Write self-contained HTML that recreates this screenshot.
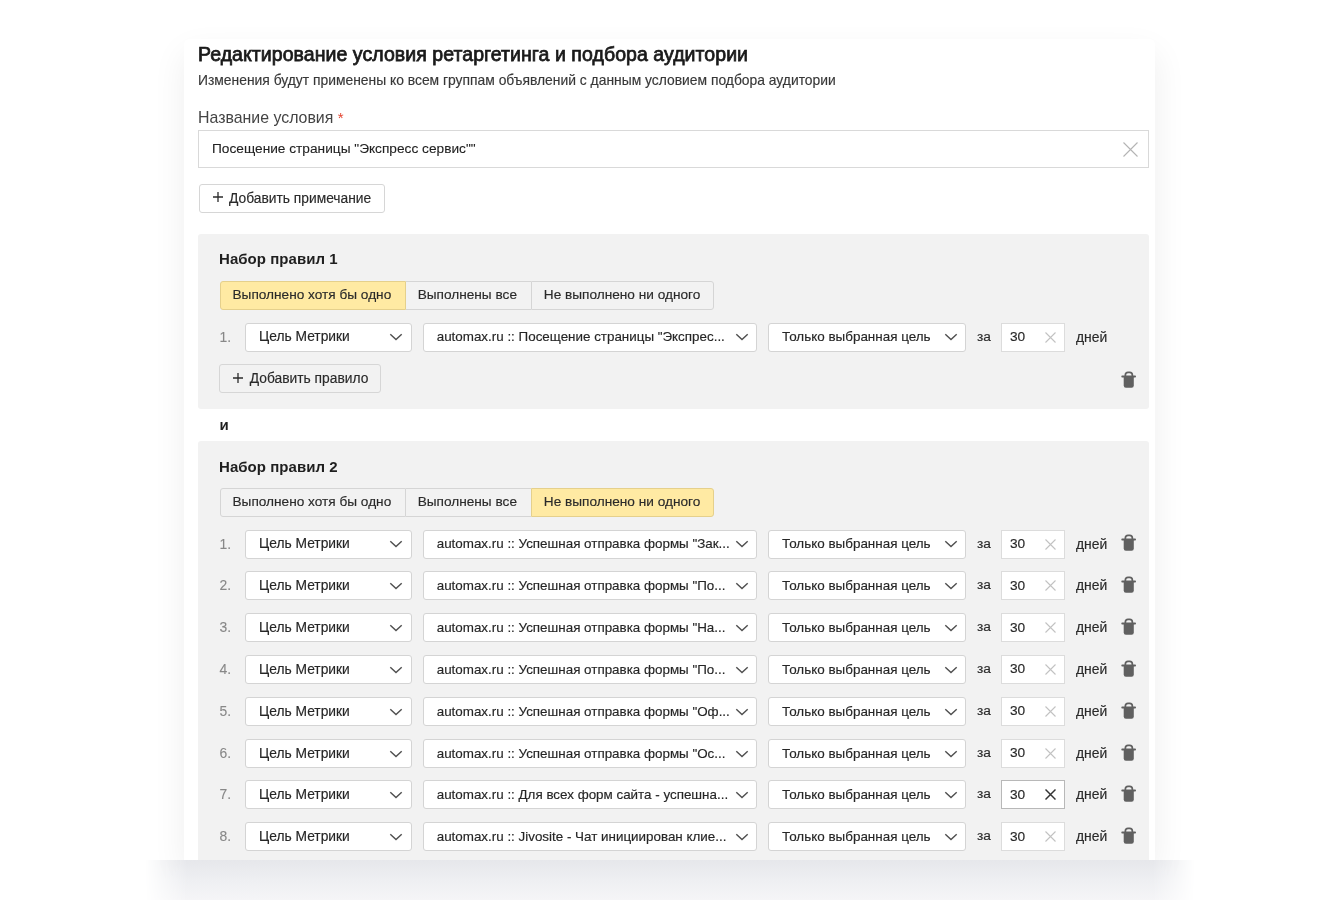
<!DOCTYPE html><html><head><meta charset="utf-8"><style>
*{box-sizing:border-box;margin:0;padding:0}
html,body{width:1340px;height:900px;overflow:hidden;background:#fff}
body{position:relative;will-change:transform;font-family:"Liberation Sans",sans-serif;color:#333}
.num,.sel,.za,.ninp,.dn,.tr,.segw,.t{position:absolute}
#shadow{position:absolute;left:184px;top:39px;width:971px;height:821px;border-radius:6px;box-shadow:0 14px 34px rgba(0,0,0,.07)}
#bshadow{position:absolute;left:145px;top:860px;width:1050px;height:40px;background:linear-gradient(to bottom,#e6e7eb,#eeeff2 50%,#f5f5f7);-webkit-mask-image:linear-gradient(to right,transparent,rgba(0,0,0,.6) 25px,#000 42px,#000 1008px,rgba(0,0,0,.6) 1025px,transparent)}
#card{position:absolute;left:184px;top:39px;width:971px;height:821px;background:#fff;border-radius:6px 6px 0 0}
.t{white-space:nowrap}
.title{left:198px;top:42.4px;font-size:19.5px;line-height:24px;font-weight:normal;color:#1a1a1a;-webkit-text-stroke:0.75px #1a1a1a;letter-spacing:0.06px}
.sub{left:198px;top:72px;font-size:13.87px;line-height:16px;color:#383838;-webkit-text-stroke:0.15px #383838}
.lbl{left:198px;top:108.6px;font-size:15.9px;line-height:18px;color:#444}
.lbl b{color:#e3432f;font-weight:normal;margin-left:4.5px;font-size:15px}
.inp{position:absolute;left:198px;top:130px;width:951px;height:38px;border:1px solid #d9d9d9;background:#fff}
.inp .it{position:absolute;left:13px;top:9px;font-size:13.7px;line-height:18px;color:#222;-webkit-text-stroke:0.1px #222;white-space:nowrap}
.inp svg{position:absolute;left:923.5px;top:11.2px}
.btn{position:absolute;border:1px solid #d6d6d6;border-radius:3px;background:#fff;white-space:nowrap}
.btn .pl{position:absolute;font-size:17px;line-height:20px;color:#333}
.btn .bt{position:absolute;font-size:13.8px;line-height:18px;color:#2a2a2a;-webkit-text-stroke:0.15px #2a2a2a}
.panel{position:absolute;left:198px;width:951px;background:#f2f2f2;border-radius:3px}
.ph{font-size:15px;line-height:18px;font-weight:bold;color:#1f1f1f;letter-spacing:0.05px}
.segw{left:219.5px;height:28.5px;width:495px}
.seg{position:absolute;top:0;height:28.5px;border:1px solid #d5d5d5;background:#f2f2f2;font-size:13.65px;line-height:18px;color:#2a2a2a;-webkit-text-stroke:0.15px #2a2a2a;white-space:nowrap}
.seg span{position:absolute;left:12px;top:4.2px}
.seg.g0{border-radius:3px 0 0 3px}
.seg.g1{border-left:none;border-right:none}
.seg.g1 span{left:12px}
.seg.g2{border-radius:0 3px 3px 0}
.seg.on{background:#ffeaa3;border-color:#e5d08c}
.g1.on{border-left:1px solid #e5d08c;border-right:1px solid #e5d08c}
.num{left:219.5px;font-size:13.9px;line-height:28.6px;top:0;height:28px;color:#888;-webkit-text-stroke:0.1px #888}
.sel{height:29px;background:#fff;border:1px solid #d4d4d4;border-radius:3px;white-space:nowrap;overflow:hidden}
.sel .st{position:absolute;left:13px;top:4.6px;font-size:13.8px;line-height:18px;color:#262626;-webkit-text-stroke:0.15px #262626}
.sel .t2{font-size:13.4px}
.sel .t3{font-size:13.45px}
.s1{left:245px;width:167px}
.s2{left:422.7px;width:334.3px}
.s3{left:768px;width:198px}
.chev{position:absolute;top:9.5px}
.s1 .chev{left:143.2px}
.s2 .chev{left:311px}
.s3 .chev{left:174.5px}
.za{left:977px;font-size:13.7px;line-height:28px;height:28px;color:#2a2a2a;-webkit-text-stroke:0.15px #2a2a2a}
.ninp{left:1001px;width:64px;height:29px;background:#fff;border:1px solid #dcdcdc}
.ninp.hov{border-color:#b8b8b8}
.ninp .nt{position:absolute;left:8px;top:4.3px;font-size:13.7px;line-height:18px;color:#2a2a2a;-webkit-text-stroke:0.15px #2a2a2a}
.ninp .xs{position:absolute;left:43px;top:8px}
.dn{left:1076px;font-size:13.9px;line-height:28px;height:28px;color:#2a2a2a;-webkit-text-stroke:0.15px #2a2a2a}
.tr{left:1120.5px;height:28px;width:16px}
.tr svg{position:absolute;top:4.7px;left:0.2px}
</style></head><body>
<div id="shadow"></div><div id="bshadow"></div><div id="card"></div>
<div class="t title">Редактирование условия ретаргетинга и подбора аудитории</div>
<div class="t sub">Изменения будут применены ко всем группам объявлений с данным условием подбора аудитории</div>
<div class="t lbl">Название условия<b>*</b></div>
<div class="inp"><span class="it">Посещение страницы "Экспресс сервис""</span><svg class="xs" width="15" height="15" viewBox="0 0 15 15"><path d="M0.5 0.5 L14.5 14.5 M14.5 0.5 L0.5 14.5" fill="none" stroke="#b4b4b4" stroke-width="1.1"/></svg></div>
<div class="btn" style="left:198.5px;top:184px;width:186px;height:28.5px"><svg class="plus" style="position:absolute;left:13.3px;top:6.5px" width="10" height="10" viewBox="0 0 10 10"><path d="M5 0 V10 M0 5 H10" stroke="#2b2b2b" stroke-width="1.3"/></svg><span class="bt" style="left:29.5px;top:4.5px">Добавить примечание</span></div>
<div class="panel" style="top:234px;height:175px"></div>
<div class="t ph" style="left:219px;top:250.3px">Набор правил 1</div>
<div class="segw" style="top:281px">
<div class="seg on g0" style="left:0.0px;width:186.2px"><span>Выполнено хотя бы одно</span></div>
<div class="seg g1" style="left:186.2px;width:125.1px"><span>Выполнены все</span></div>
<div class="seg g2" style="left:311.3px;width:183.7px"><span>Не выполнено ни одного</span></div>
</div>
<div class="num" style="top:322.60px">1.</div>
<div class="sel s1" style="top:322.60px"><span class="st">Цель Метрики</span><svg class="chev" width="14" height="8" viewBox="0 0 14 8"><path d="M1.3 1.3 L7 6.6 L12.7 1.3" fill="none" stroke="#505050" stroke-width="1.45"/></svg></div>
<div class="sel s2" style="top:322.60px"><span class="st t2">automax.ru :: Посещение страницы "Экспрес...</span><svg class="chev" width="14" height="8" viewBox="0 0 14 8"><path d="M1.3 1.3 L7 6.6 L12.7 1.3" fill="none" stroke="#505050" stroke-width="1.45"/></svg></div>
<div class="sel s3" style="top:322.60px"><span class="st t3">Только выбранная цель</span><svg class="chev" width="14" height="8" viewBox="0 0 14 8"><path d="M1.3 1.3 L7 6.6 L12.7 1.3" fill="none" stroke="#505050" stroke-width="1.45"/></svg></div>
<div class="za" style="top:322.60px">за</div>
<div class="ninp" style="top:322.60px"><span class="nt">30</span><svg class="xs" width="11" height="11" viewBox="0 0 11 11"><path d="M0.5 0.5 L10.5 10.5 M10.5 0.5 L0.5 10.5" fill="none" stroke="#c2c2c2" stroke-width="1.1"/></svg></div>
<div class="dn" style="top:322.60px">дней</div>
<div class="btn" style="left:219.3px;top:364.2px;width:161.5px;height:29.3px;background:#f2f2f2"><svg class="plus" style="position:absolute;left:13.2px;top:8.2px" width="10" height="10" viewBox="0 0 10 10"><path d="M5 0 V10 M0 5 H10" stroke="#2b2b2b" stroke-width="1.3"/></svg><span class="bt" style="left:29.5px;top:4.5px">Добавить правило</span></div>
<div class="tr" style="top:366.5px"><svg width="16" height="18" viewBox="0 0 16 18"><path d="M4.35 5.2 V4 Q4.35 1.35 7 1.35 H8.7 Q11.35 1.35 11.35 4 V5.2" fill="none" stroke="#606060" stroke-width="1.7"/><rect x="0.3" y="4.5" width="14.7" height="1.9" rx="0.9" fill="#606060"/><path d="M2.7 5.8 H12.8 V14.6 Q12.8 16.8 10.6 16.8 H4.9 Q2.7 16.8 2.7 14.6 Z" fill="#606060"/></svg></div>
<div class="t ph" style="left:219.5px;top:415.5px">и</div>
<div class="panel" style="top:441px;height:419px;border-radius:3px 3px 0 0"></div>
<div class="t ph" style="left:219px;top:457.5px">Набор правил 2</div>
<div class="segw" style="top:488px">
<div class="seg g0" style="left:0.0px;width:186.2px"><span>Выполнено хотя бы одно</span></div>
<div class="seg g1" style="left:186.2px;width:125.1px"><span>Выполнены все</span></div>
<div class="seg on g2" style="left:311.3px;width:183.7px"><span>Не выполнено ни одного</span></div>
</div>
<div class="num" style="top:529.50px">1.</div>
<div class="sel s1" style="top:529.50px"><span class="st">Цель Метрики</span><svg class="chev" width="14" height="8" viewBox="0 0 14 8"><path d="M1.3 1.3 L7 6.6 L12.7 1.3" fill="none" stroke="#505050" stroke-width="1.45"/></svg></div>
<div class="sel s2" style="top:529.50px"><span class="st t2">automax.ru :: Успешная отправка формы "Зак...</span><svg class="chev" width="14" height="8" viewBox="0 0 14 8"><path d="M1.3 1.3 L7 6.6 L12.7 1.3" fill="none" stroke="#505050" stroke-width="1.45"/></svg></div>
<div class="sel s3" style="top:529.50px"><span class="st t3">Только выбранная цель</span><svg class="chev" width="14" height="8" viewBox="0 0 14 8"><path d="M1.3 1.3 L7 6.6 L12.7 1.3" fill="none" stroke="#505050" stroke-width="1.45"/></svg></div>
<div class="za" style="top:529.50px">за</div>
<div class="ninp" style="top:529.50px"><span class="nt">30</span><svg class="xs" width="11" height="11" viewBox="0 0 11 11"><path d="M0.5 0.5 L10.5 10.5 M10.5 0.5 L0.5 10.5" fill="none" stroke="#c2c2c2" stroke-width="1.1"/></svg></div>
<div class="dn" style="top:529.50px">дней</div>
<div class="tr" style="top:529.50px"><svg width="16" height="18" viewBox="0 0 16 18"><path d="M4.35 5.2 V4 Q4.35 1.35 7 1.35 H8.7 Q11.35 1.35 11.35 4 V5.2" fill="none" stroke="#606060" stroke-width="1.7"/><rect x="0.3" y="4.5" width="14.7" height="1.9" rx="0.9" fill="#606060"/><path d="M2.7 5.8 H12.8 V14.6 Q12.8 16.8 10.6 16.8 H4.9 Q2.7 16.8 2.7 14.6 Z" fill="#606060"/></svg></div>
<div class="num" style="top:571.40px">2.</div>
<div class="sel s1" style="top:571.40px"><span class="st">Цель Метрики</span><svg class="chev" width="14" height="8" viewBox="0 0 14 8"><path d="M1.3 1.3 L7 6.6 L12.7 1.3" fill="none" stroke="#505050" stroke-width="1.45"/></svg></div>
<div class="sel s2" style="top:571.40px"><span class="st t2">automax.ru :: Успешная отправка формы "По...</span><svg class="chev" width="14" height="8" viewBox="0 0 14 8"><path d="M1.3 1.3 L7 6.6 L12.7 1.3" fill="none" stroke="#505050" stroke-width="1.45"/></svg></div>
<div class="sel s3" style="top:571.40px"><span class="st t3">Только выбранная цель</span><svg class="chev" width="14" height="8" viewBox="0 0 14 8"><path d="M1.3 1.3 L7 6.6 L12.7 1.3" fill="none" stroke="#505050" stroke-width="1.45"/></svg></div>
<div class="za" style="top:571.40px">за</div>
<div class="ninp" style="top:571.40px"><span class="nt">30</span><svg class="xs" width="11" height="11" viewBox="0 0 11 11"><path d="M0.5 0.5 L10.5 10.5 M10.5 0.5 L0.5 10.5" fill="none" stroke="#c2c2c2" stroke-width="1.1"/></svg></div>
<div class="dn" style="top:571.40px">дней</div>
<div class="tr" style="top:571.40px"><svg width="16" height="18" viewBox="0 0 16 18"><path d="M4.35 5.2 V4 Q4.35 1.35 7 1.35 H8.7 Q11.35 1.35 11.35 4 V5.2" fill="none" stroke="#606060" stroke-width="1.7"/><rect x="0.3" y="4.5" width="14.7" height="1.9" rx="0.9" fill="#606060"/><path d="M2.7 5.8 H12.8 V14.6 Q12.8 16.8 10.6 16.8 H4.9 Q2.7 16.8 2.7 14.6 Z" fill="#606060"/></svg></div>
<div class="num" style="top:613.30px">3.</div>
<div class="sel s1" style="top:613.30px"><span class="st">Цель Метрики</span><svg class="chev" width="14" height="8" viewBox="0 0 14 8"><path d="M1.3 1.3 L7 6.6 L12.7 1.3" fill="none" stroke="#505050" stroke-width="1.45"/></svg></div>
<div class="sel s2" style="top:613.30px"><span class="st t2">automax.ru :: Успешная отправка формы "На...</span><svg class="chev" width="14" height="8" viewBox="0 0 14 8"><path d="M1.3 1.3 L7 6.6 L12.7 1.3" fill="none" stroke="#505050" stroke-width="1.45"/></svg></div>
<div class="sel s3" style="top:613.30px"><span class="st t3">Только выбранная цель</span><svg class="chev" width="14" height="8" viewBox="0 0 14 8"><path d="M1.3 1.3 L7 6.6 L12.7 1.3" fill="none" stroke="#505050" stroke-width="1.45"/></svg></div>
<div class="za" style="top:613.30px">за</div>
<div class="ninp" style="top:613.30px"><span class="nt">30</span><svg class="xs" width="11" height="11" viewBox="0 0 11 11"><path d="M0.5 0.5 L10.5 10.5 M10.5 0.5 L0.5 10.5" fill="none" stroke="#c2c2c2" stroke-width="1.1"/></svg></div>
<div class="dn" style="top:613.30px">дней</div>
<div class="tr" style="top:613.30px"><svg width="16" height="18" viewBox="0 0 16 18"><path d="M4.35 5.2 V4 Q4.35 1.35 7 1.35 H8.7 Q11.35 1.35 11.35 4 V5.2" fill="none" stroke="#606060" stroke-width="1.7"/><rect x="0.3" y="4.5" width="14.7" height="1.9" rx="0.9" fill="#606060"/><path d="M2.7 5.8 H12.8 V14.6 Q12.8 16.8 10.6 16.8 H4.9 Q2.7 16.8 2.7 14.6 Z" fill="#606060"/></svg></div>
<div class="num" style="top:655.20px">4.</div>
<div class="sel s1" style="top:655.20px"><span class="st">Цель Метрики</span><svg class="chev" width="14" height="8" viewBox="0 0 14 8"><path d="M1.3 1.3 L7 6.6 L12.7 1.3" fill="none" stroke="#505050" stroke-width="1.45"/></svg></div>
<div class="sel s2" style="top:655.20px"><span class="st t2">automax.ru :: Успешная отправка формы "По...</span><svg class="chev" width="14" height="8" viewBox="0 0 14 8"><path d="M1.3 1.3 L7 6.6 L12.7 1.3" fill="none" stroke="#505050" stroke-width="1.45"/></svg></div>
<div class="sel s3" style="top:655.20px"><span class="st t3">Только выбранная цель</span><svg class="chev" width="14" height="8" viewBox="0 0 14 8"><path d="M1.3 1.3 L7 6.6 L12.7 1.3" fill="none" stroke="#505050" stroke-width="1.45"/></svg></div>
<div class="za" style="top:655.20px">за</div>
<div class="ninp" style="top:655.20px"><span class="nt">30</span><svg class="xs" width="11" height="11" viewBox="0 0 11 11"><path d="M0.5 0.5 L10.5 10.5 M10.5 0.5 L0.5 10.5" fill="none" stroke="#c2c2c2" stroke-width="1.1"/></svg></div>
<div class="dn" style="top:655.20px">дней</div>
<div class="tr" style="top:655.20px"><svg width="16" height="18" viewBox="0 0 16 18"><path d="M4.35 5.2 V4 Q4.35 1.35 7 1.35 H8.7 Q11.35 1.35 11.35 4 V5.2" fill="none" stroke="#606060" stroke-width="1.7"/><rect x="0.3" y="4.5" width="14.7" height="1.9" rx="0.9" fill="#606060"/><path d="M2.7 5.8 H12.8 V14.6 Q12.8 16.8 10.6 16.8 H4.9 Q2.7 16.8 2.7 14.6 Z" fill="#606060"/></svg></div>
<div class="num" style="top:697.10px">5.</div>
<div class="sel s1" style="top:697.10px"><span class="st">Цель Метрики</span><svg class="chev" width="14" height="8" viewBox="0 0 14 8"><path d="M1.3 1.3 L7 6.6 L12.7 1.3" fill="none" stroke="#505050" stroke-width="1.45"/></svg></div>
<div class="sel s2" style="top:697.10px"><span class="st t2">automax.ru :: Успешная отправка формы "Оф...</span><svg class="chev" width="14" height="8" viewBox="0 0 14 8"><path d="M1.3 1.3 L7 6.6 L12.7 1.3" fill="none" stroke="#505050" stroke-width="1.45"/></svg></div>
<div class="sel s3" style="top:697.10px"><span class="st t3">Только выбранная цель</span><svg class="chev" width="14" height="8" viewBox="0 0 14 8"><path d="M1.3 1.3 L7 6.6 L12.7 1.3" fill="none" stroke="#505050" stroke-width="1.45"/></svg></div>
<div class="za" style="top:697.10px">за</div>
<div class="ninp" style="top:697.10px"><span class="nt">30</span><svg class="xs" width="11" height="11" viewBox="0 0 11 11"><path d="M0.5 0.5 L10.5 10.5 M10.5 0.5 L0.5 10.5" fill="none" stroke="#c2c2c2" stroke-width="1.1"/></svg></div>
<div class="dn" style="top:697.10px">дней</div>
<div class="tr" style="top:697.10px"><svg width="16" height="18" viewBox="0 0 16 18"><path d="M4.35 5.2 V4 Q4.35 1.35 7 1.35 H8.7 Q11.35 1.35 11.35 4 V5.2" fill="none" stroke="#606060" stroke-width="1.7"/><rect x="0.3" y="4.5" width="14.7" height="1.9" rx="0.9" fill="#606060"/><path d="M2.7 5.8 H12.8 V14.6 Q12.8 16.8 10.6 16.8 H4.9 Q2.7 16.8 2.7 14.6 Z" fill="#606060"/></svg></div>
<div class="num" style="top:739.00px">6.</div>
<div class="sel s1" style="top:739.00px"><span class="st">Цель Метрики</span><svg class="chev" width="14" height="8" viewBox="0 0 14 8"><path d="M1.3 1.3 L7 6.6 L12.7 1.3" fill="none" stroke="#505050" stroke-width="1.45"/></svg></div>
<div class="sel s2" style="top:739.00px"><span class="st t2">automax.ru :: Успешная отправка формы "Ос...</span><svg class="chev" width="14" height="8" viewBox="0 0 14 8"><path d="M1.3 1.3 L7 6.6 L12.7 1.3" fill="none" stroke="#505050" stroke-width="1.45"/></svg></div>
<div class="sel s3" style="top:739.00px"><span class="st t3">Только выбранная цель</span><svg class="chev" width="14" height="8" viewBox="0 0 14 8"><path d="M1.3 1.3 L7 6.6 L12.7 1.3" fill="none" stroke="#505050" stroke-width="1.45"/></svg></div>
<div class="za" style="top:739.00px">за</div>
<div class="ninp" style="top:739.00px"><span class="nt">30</span><svg class="xs" width="11" height="11" viewBox="0 0 11 11"><path d="M0.5 0.5 L10.5 10.5 M10.5 0.5 L0.5 10.5" fill="none" stroke="#c2c2c2" stroke-width="1.1"/></svg></div>
<div class="dn" style="top:739.00px">дней</div>
<div class="tr" style="top:739.00px"><svg width="16" height="18" viewBox="0 0 16 18"><path d="M4.35 5.2 V4 Q4.35 1.35 7 1.35 H8.7 Q11.35 1.35 11.35 4 V5.2" fill="none" stroke="#606060" stroke-width="1.7"/><rect x="0.3" y="4.5" width="14.7" height="1.9" rx="0.9" fill="#606060"/><path d="M2.7 5.8 H12.8 V14.6 Q12.8 16.8 10.6 16.8 H4.9 Q2.7 16.8 2.7 14.6 Z" fill="#606060"/></svg></div>
<div class="num" style="top:780.40px">7.</div>
<div class="sel s1" style="top:780.40px"><span class="st">Цель Метрики</span><svg class="chev" width="14" height="8" viewBox="0 0 14 8"><path d="M1.3 1.3 L7 6.6 L12.7 1.3" fill="none" stroke="#505050" stroke-width="1.45"/></svg></div>
<div class="sel s2" style="top:780.40px"><span class="st t2">automax.ru :: Для всех форм сайта - успешна...</span><svg class="chev" width="14" height="8" viewBox="0 0 14 8"><path d="M1.3 1.3 L7 6.6 L12.7 1.3" fill="none" stroke="#505050" stroke-width="1.45"/></svg></div>
<div class="sel s3" style="top:780.40px"><span class="st t3">Только выбранная цель</span><svg class="chev" width="14" height="8" viewBox="0 0 14 8"><path d="M1.3 1.3 L7 6.6 L12.7 1.3" fill="none" stroke="#505050" stroke-width="1.45"/></svg></div>
<div class="za" style="top:780.40px">за</div>
<div class="ninp hov" style="top:780.40px"><span class="nt">30</span><svg class="xs" width="11" height="11" viewBox="0 0 11 11"><path d="M0.5 0.5 L10.5 10.5 M10.5 0.5 L0.5 10.5" fill="none" stroke="#333" stroke-width="1.45"/></svg></div>
<div class="dn" style="top:780.40px">дней</div>
<div class="tr" style="top:780.40px"><svg width="16" height="18" viewBox="0 0 16 18"><path d="M4.35 5.2 V4 Q4.35 1.35 7 1.35 H8.7 Q11.35 1.35 11.35 4 V5.2" fill="none" stroke="#606060" stroke-width="1.7"/><rect x="0.3" y="4.5" width="14.7" height="1.9" rx="0.9" fill="#606060"/><path d="M2.7 5.8 H12.8 V14.6 Q12.8 16.8 10.6 16.8 H4.9 Q2.7 16.8 2.7 14.6 Z" fill="#606060"/></svg></div>
<div class="num" style="top:822.40px">8.</div>
<div class="sel s1" style="top:822.40px"><span class="st">Цель Метрики</span><svg class="chev" width="14" height="8" viewBox="0 0 14 8"><path d="M1.3 1.3 L7 6.6 L12.7 1.3" fill="none" stroke="#505050" stroke-width="1.45"/></svg></div>
<div class="sel s2" style="top:822.40px"><span class="st t2">automax.ru :: Jivosite - Чат инициирован клие...</span><svg class="chev" width="14" height="8" viewBox="0 0 14 8"><path d="M1.3 1.3 L7 6.6 L12.7 1.3" fill="none" stroke="#505050" stroke-width="1.45"/></svg></div>
<div class="sel s3" style="top:822.40px"><span class="st t3">Только выбранная цель</span><svg class="chev" width="14" height="8" viewBox="0 0 14 8"><path d="M1.3 1.3 L7 6.6 L12.7 1.3" fill="none" stroke="#505050" stroke-width="1.45"/></svg></div>
<div class="za" style="top:822.40px">за</div>
<div class="ninp" style="top:822.40px"><span class="nt">30</span><svg class="xs" width="11" height="11" viewBox="0 0 11 11"><path d="M0.5 0.5 L10.5 10.5 M10.5 0.5 L0.5 10.5" fill="none" stroke="#c2c2c2" stroke-width="1.1"/></svg></div>
<div class="dn" style="top:822.40px">дней</div>
<div class="tr" style="top:822.40px"><svg width="16" height="18" viewBox="0 0 16 18"><path d="M4.35 5.2 V4 Q4.35 1.35 7 1.35 H8.7 Q11.35 1.35 11.35 4 V5.2" fill="none" stroke="#606060" stroke-width="1.7"/><rect x="0.3" y="4.5" width="14.7" height="1.9" rx="0.9" fill="#606060"/><path d="M2.7 5.8 H12.8 V14.6 Q12.8 16.8 10.6 16.8 H4.9 Q2.7 16.8 2.7 14.6 Z" fill="#606060"/></svg></div>
</body></html>
